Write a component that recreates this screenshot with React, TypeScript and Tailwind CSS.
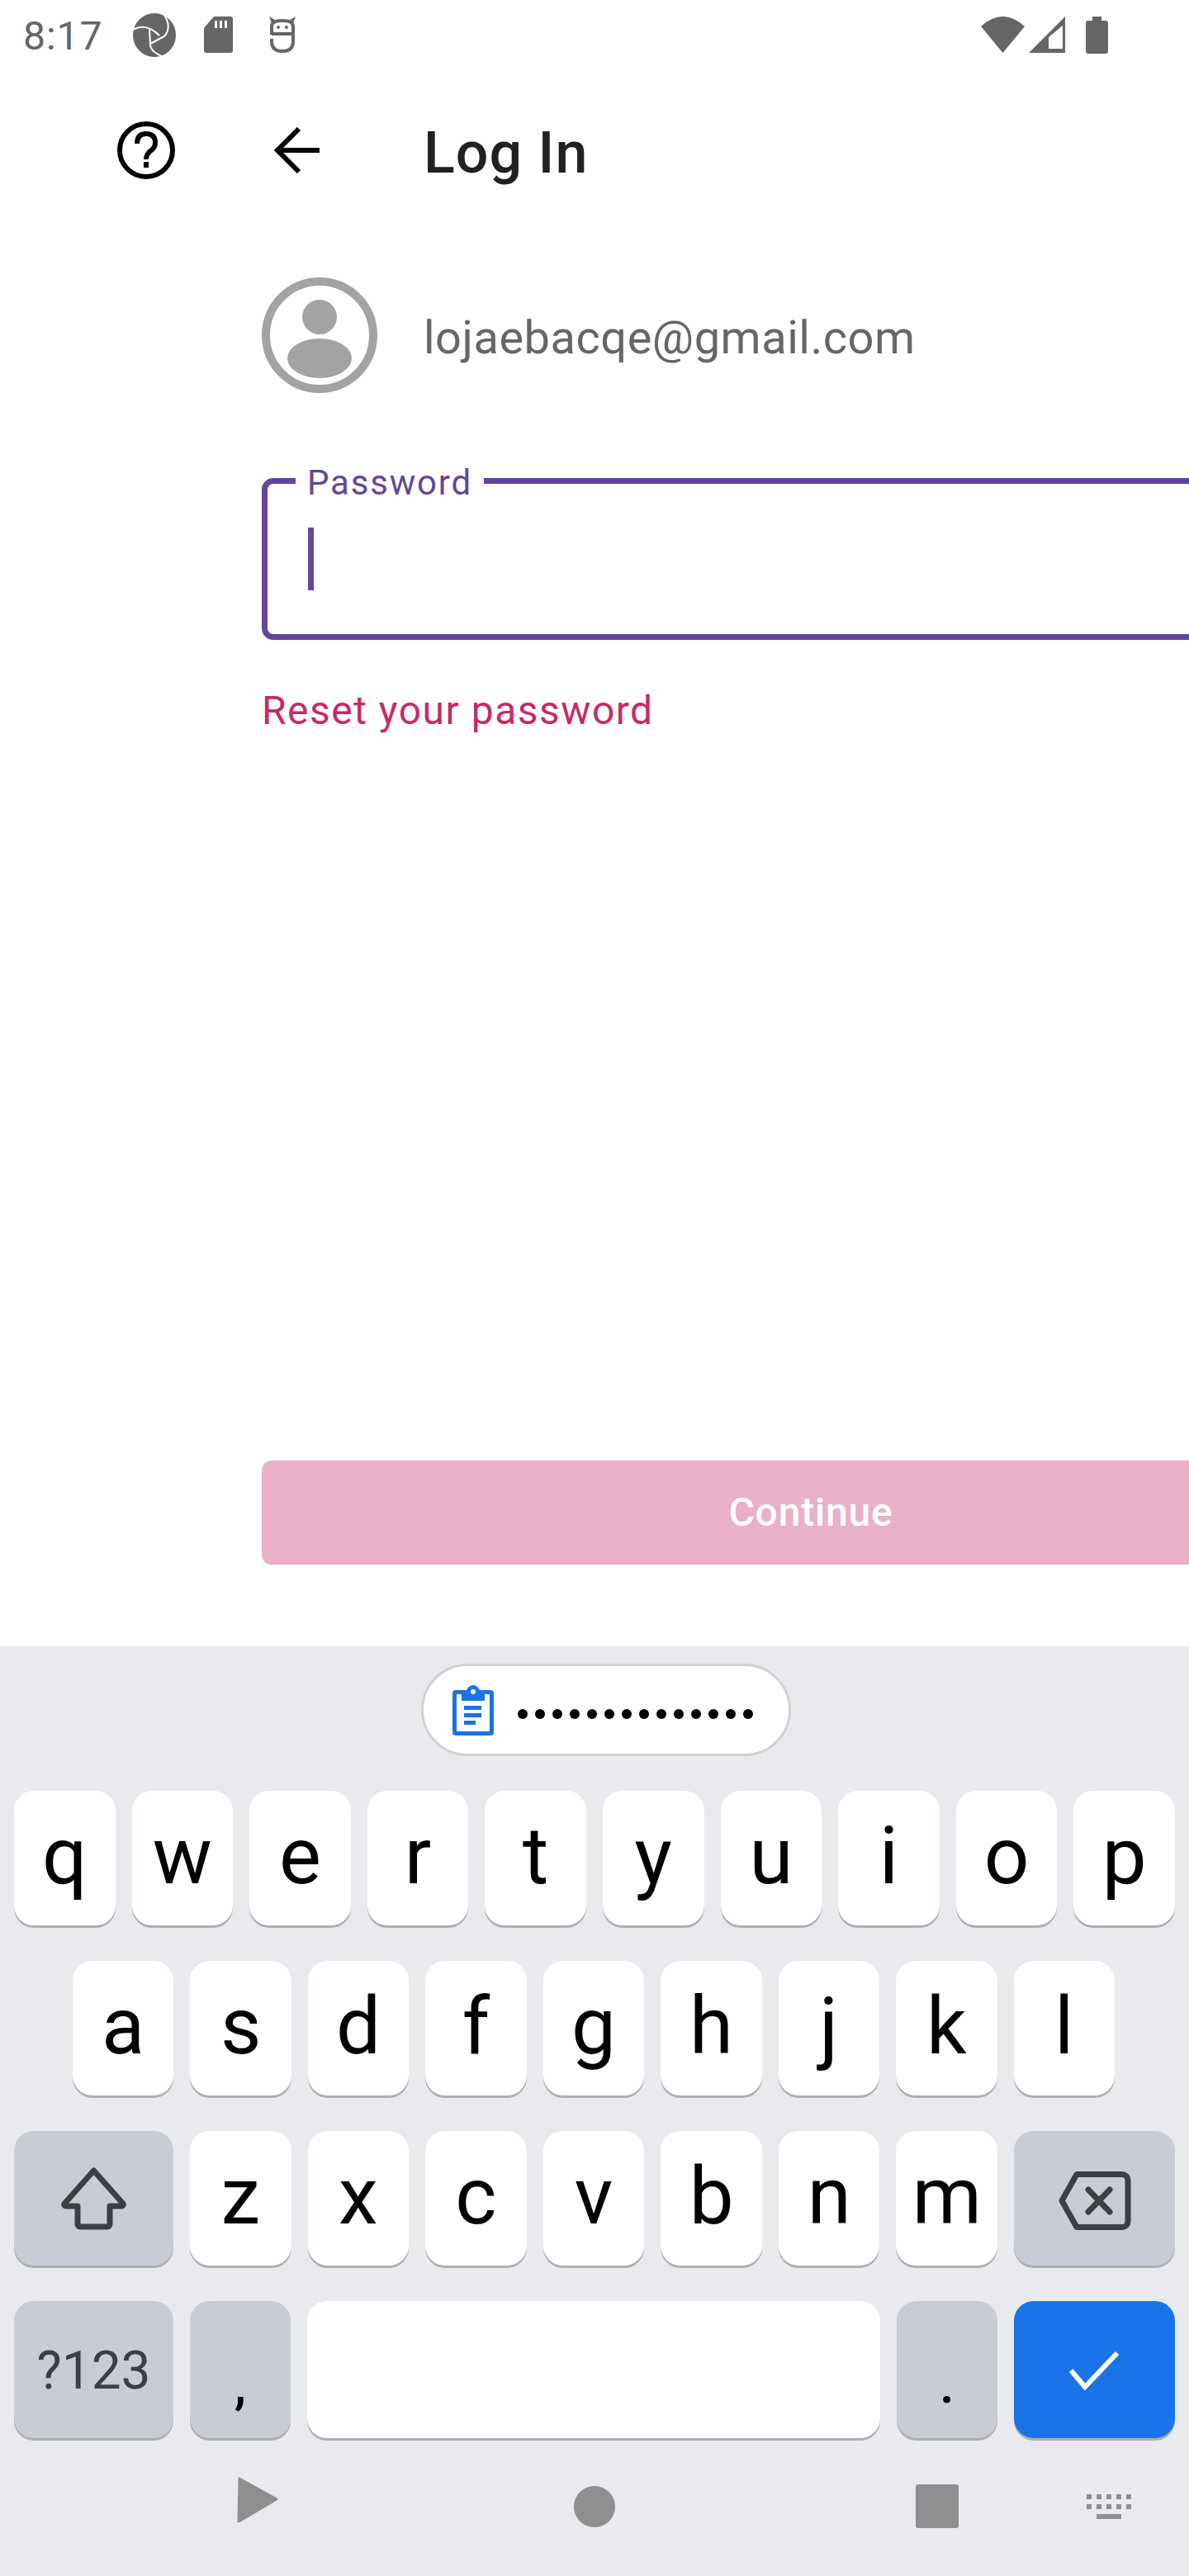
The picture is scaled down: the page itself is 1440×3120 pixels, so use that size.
import { ReactNode } from "react";

const font = { fontFamily: "Roboto, sans-serif" };

function Key({ label, w = "flex-1", bg = "bg-white", h = "h-[163px]", children }: { label?: string; w?: string; bg?: string; h?: string; children?: ReactNode }) {
  return (
    <div className={`${w} ${bg} ${h} rounded-[24px] shadow-[0_3px_0_#aeafb3] flex items-center justify-center`}>
      {label && <span className="text-[96px] leading-none text-black pb-[6px]">{label}</span>}
      {children}
    </div>
  );
}

function Row({ keys }: { keys: string }) {
  return (
    <>
      {keys.split("").map((k) => (
        <Key key={k} label={k} />
      ))}
    </>
  );
}

export default function App() {
  return (
    <div className="w-[1440px] h-[3120px] bg-white flex flex-col overflow-hidden" style={font}>
      {/* status bar */}
      <div className="h-[84px] flex items-center text-[#666666]">
        <span className="ml-[28px] w-[96px] text-[48px] leading-none tracking-[1px] mt-[4px] whitespace-nowrap">8:17</span>
        <svg className="ml-[37px]" width="52" height="53" viewBox="0 0 52 53">
          <ellipse cx="26" cy="26.5" rx="26" ry="26.5" fill="#666666" />
          <path d="M0 20Q16 11 32 27M37 1Q48 16 38 28L21 37Q20 46 37 53M21 37 20 20" stroke="#ffffff" strokeWidth="2" fill="none" />
        </svg>
        <svg className="ml-[34px]" width="35" height="44" viewBox="0 0 35 44">
          <path d="M12 0H32a3 3 0 0 1 3 3V41a3 3 0 0 1-3 3H3a3 3 0 0 1-3-3V14Z" fill="#666666" />
          <path d="M13 5h3v9h-3zM19 5h3v9h-3zM25 5h3v9h-3z" fill="#ffffff" />
        </svg>
        <svg className="ml-[44px]" width="32" height="44" viewBox="0 0 32 44">
          <path d="M3 22V12Q3 5 16 5Q29 5 29 12V21H3M29 21V30Q29 42 16 42Q3 42 3 30V27" stroke="#666666" strokeWidth="4" fill="none" />
          <path d="M0 0 7 4 3 8ZM32 0 25 4 29 8Z" fill="#666666" />
          <circle cx="11" cy="13" r="2" fill="#666666" />
          <circle cx="21" cy="13" r="2" fill="#666666" />
        </svg>
        <svg className="ml-[830px]" width="53" height="44" viewBox="0 0 53 44">
          <path d="M0 12Q26.500 -12 53 12L26.500 44Z" fill="#666666" />
        </svg>
        <svg className="ml-[5px]" width="44" height="44" viewBox="0 0 44 44">
          <path d="M44 0V44H0Z" fill="#666666" />
          <path d="M24 25 41 11V39H24Z" fill="#ffffff" />
        </svg>
        <svg className="ml-[25px]" width="27" height="45" viewBox="0 0 27 45">
          <path d="M8 0H19V5H24a3 3 0 0 1 3 3V42a3 3 0 0 1-3 3H3a3 3 0 0 1-3-3V8a3 3 0 0 1 3-3H8Z" fill="#666666" />
        </svg>
      </div>

      {/* app bar */}
      <div className="h-[104px] mt-[46px] flex items-center">
        <svg className="ml-[142px]" width="70" height="70" viewBox="0 0 70 70" fill="none">
          <circle cx="35" cy="35" r="32" stroke="#000" strokeWidth="6" />
          <path d="M24 27Q24 15 35 15Q46 15 46 26Q46 32 40 36Q35 40 35 46" stroke="#000" strokeWidth="6" />
          <rect x="32" y="49" width="6" height="7" fill="#000" />
        </svg>
        <svg className="ml-[119px]" width="56" height="56" viewBox="0 0 56 56" fill="none">
          <path d="M56 28H5M31 2 5 28l26 26" stroke="#000" strokeWidth="6" />
        </svg>
        <span className="ml-[126px] mt-[6px] text-[70px] leading-none tracking-[1px] font-medium text-[#212121]">Log In</span>
      </div>

      {/* account */}
      <div className="mt-[102px] flex items-center">
        <svg className="ml-[317px]" width="140" height="140" viewBox="0 0 140 140" fill="none">
          <circle cx="70" cy="70" r="65" stroke="#a3a3a3" strokeWidth="10" />
          <circle cx="70" cy="48" r="21" fill="#a3a3a3" />
          <ellipse cx="70" cy="98" rx="39" ry="24" fill="#a3a3a3" />
        </svg>
        <span className="ml-[56px] mt-[5px] text-[56px] leading-none tracking-[0.5px] text-[#666666] whitespace-nowrap">lojaebacqe@gmail.com</span>
      </div>

      {/* password field */}
      <div className="relative mt-[103px] ml-[317px] h-[196px] w-[1330px] border-[7px] border-[#65459a] rounded-[14px]">
        <div className="absolute -top-[22px] left-[34px] w-[228px] h-[42px] bg-white flex items-center justify-center">
          <span className="text-[42px] leading-none tracking-[1.8px] text-[#65459a]">Password</span>
        </div>
        <div className="absolute top-[53px] left-[49px] w-[7px] h-[76px] bg-[#65459a]" />
      </div>
      <span className="ml-[317px] mt-[62px] text-[48px] leading-none tracking-[1.5px] text-[#c72a66] whitespace-nowrap">Reset your password</span>

      {/* continue */}
      <div className="mt-[884px] ml-[317px] w-[1330px] h-[126px] bg-[#e9b0c7] rounded-[12px] flex items-center justify-center shrink-0">
        <span className="text-[48px] leading-none tracking-[0.8px] font-medium text-white">Continue</span>
      </div>

      {/* keyboard */}
      <div className="mt-[99px] flex-1 bg-[#e8eaed] shadow-[0_-2px_3px_rgba(0,0,0,0.03)] flex flex-col pt-[21px]">
        <div className="ml-[510px] w-[448px] h-[112px] bg-white rounded-full border-[3px] border-[#d0d1d4] flex items-center pl-[35px]">
          <svg className="shrink-0" width="50" height="61" viewBox="0 0 50 61" fill="none">
            <path d="M4 6H17Q20 0 25 0Q30 0 33 6H46a4 4 0 0 1 4 4V57a4 4 0 0 1-4 4H4a4 4 0 0 1-4-4V10a4 4 0 0 1 4-4Z" fill="#1a73e8" />
            <rect x="5" y="11" width="40" height="45" fill="#ffffff" />
            <rect x="11" y="6" width="28" height="13" fill="#1a73e8" />
            <circle cx="25" cy="8" r="3" fill="#ffffff" />
            <path d="M14 25h21v5H14zM14 34h21v5H14zM14 43h14v5H14z" fill="#1a73e8" />
          </svg>
          <div className="ml-[29px] flex gap-[9px] mt-[10px]">
            {Array.from({ length: 14 }).map((_, i) => (
              <span key={i} className="w-[12px] h-[12px] rounded-full bg-black" />
            ))}
          </div>
        </div>

        <div className="mt-[42px] flex flex-col gap-[43px] px-[17px]">
          <div className="flex gap-[20px]">
            <Row keys="qwertyuiop" />
          </div>
          <div className="flex gap-[20px] pl-[71px] pr-[73px]">
            <Row keys="asdfghjkl" />
          </div>
          <div className="flex gap-[20px]">
            <Key w="w-[193px]" bg="bg-[#c9ccd4]">
              <svg width="79" height="76" viewBox="0 0 79 76" fill="none">
                <path d="M39.500 4 4 44a2 2 0 0 0 2 3H20V69a3 3 0 0 0 3 3H56a3 3 0 0 0 3-3V47H73a2 2 0 0 0 2-3Z" stroke="#3c4043" strokeWidth="7" strokeLinejoin="round" />
              </svg>
            </Key>
            <Row keys="zxcvbnm" />
            <Key w="w-[195px]" bg="bg-[#c9ccd4]">
              <svg className="mt-[6px]" width="88" height="71" viewBox="0 0 88 71" fill="none">
                <path d="M22 3.500H77a7 7 0 0 1 7 7V60.500a7 7 0 0 1-7 7H22L4 35.500Z" stroke="#3c4043" strokeWidth="7" strokeLinejoin="round" />
                <path d="M36 22 62 49M62 22 36 49" stroke="#3c4043" strokeWidth="7" strokeLinecap="round" />
              </svg>
            </Key>
          </div>
          <div className="flex gap-[20px]">
            <Key w="w-[193px]" bg="bg-[#c9ccd4]" h="h-[166px]">
              <span className="text-[64px] leading-none text-[#3c4043] mt-[4px]">?123</span>
            </Key>
            <Key w="w-[122px]" bg="bg-[#c9ccd4]" h="h-[166px]">
              <span className="text-[64px] leading-none text-black font-medium mt-[38px]">,</span>
            </Key>
            <Key w="flex-1" h="h-[166px]" />
            <Key w="w-[122px]" bg="bg-[#c9ccd4]" h="h-[166px]">
              <span className="text-[64px] leading-none text-black font-medium mt-[38px]">.</span>
            </Key>
            <Key w="w-[195px]" bg="bg-[#1a73e8]" h="h-[166px]">
              <svg className="mt-[2px]" width="61" height="47" viewBox="0 0 61 47" fill="none">
                <path d="M2 23 19 43 58 2" stroke="#ffffff" strokeWidth="6" />
              </svg>
            </Key>
          </div>
        </div>

        {/* nav bar */}
        <div className="flex items-start">
          <svg className="ml-[287px] mt-[47px]" width="51" height="56" viewBox="0 0 51 56">
            <path d="M3 2 48 27 2 54Z" fill="#8e8f91" stroke="#8e8f91" strokeWidth="3" strokeLinejoin="round" />
          </svg>
          <div className="ml-[357px] mt-[58px] w-[50px] h-[50px] rounded-full bg-[#8e8f91]" />
          <div className="ml-[364px] mt-[56px] w-[52px] h-[53px] rounded-[3px] bg-[#8e8f91]" />
          <svg className="ml-[155px] mt-[68px]" width="54" height="30" viewBox="0 0 54 30">
            <path d="M0 0h6v6H0zM12 0h6v6h-6zM24 0h6v6h-6zM36 0h6v6h-6zM48 0h6v6h-6zM0 12h6v6H0zM12 12h6v6h-6zM24 12h6v6h-6zM36 12h6v6h-6zM48 12h6v6h-6zM12 24h30v6H12z" fill="#8e8f91" />
          </svg>
        </div>
      </div>
    </div>
  );
}
